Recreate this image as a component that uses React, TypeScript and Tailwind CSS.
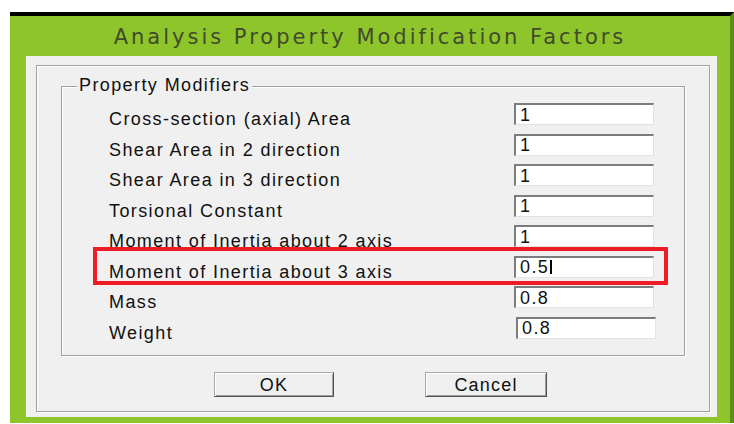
import React from 'react';

type Modifier = { label: string; value: string; active?: boolean; shift?: boolean };

const modifiers: Modifier[] = [
  { label: 'Cross-section (axial) Area', value: '1' },
  { label: 'Shear Area in 2 direction', value: '1' },
  { label: 'Shear Area in 3 direction', value: '1' },
  { label: 'Torsional Constant', value: '1' },
  { label: 'Moment of Inertia about 2 axis', value: '1' },
  { label: 'Moment of Inertia about 3 axis', value: '0.5', active: true },
  { label: 'Mass', value: '0.8' },
  { label: 'Weight', value: '0.8', shift: true },
];

function ValueBox({ value, active, shift }: { value: string; active?: boolean; shift?: boolean }) {
  return (
    <div
      className={`flex h-[22px] w-[140px] items-center bg-white pl-[4px] border-t-2 border-l-2 border-t-[#7c7c7c] border-l-[#7c7c7c] border-r border-b border-r-[#e2e2e2] border-b-[#e2e2e2] ${
        shift ? 'ml-[2px]' : ''
      }`}
    >
      <span className="leading-[18px]">{value}</span>
      {active && <span className="ml-[1px] h-[14px] w-[2px] bg-black" />}
    </div>
  );
}

function Button({ children, width }: { children: React.ReactNode; width: string }) {
  return (
    <button
      className={`${width} h-[25px] bg-[#efefef] border border-t-[#a8a8a8] border-l-[#a8a8a8] border-r-[#505050] border-b-[#505050] shadow-[inset_1px_1px_0_#ffffff,inset_-1px_-1px_0_#a0a0a0] text-[18px] leading-[18px] tracking-[1.2px] text-[#111]`}
    >
      {children}
    </button>
  );
}

export default function App() {
  return (
    <div className="h-[424px] w-[734px] overflow-hidden bg-white pt-[12px] pl-[10px] font-['Liberation_Sans',Arial,sans-serif]">
      <div className="flex h-[411px] w-[724px] flex-col border-t-4 border-t-black border-r-4 border-r-[#5f8d1d] bg-[#8dc52b]">
        {/* caption */}
        <div className="flex h-[40px] items-center justify-center pt-[2px]">
          <span className="font-['DejaVu_Sans',Verdana,sans-serif] text-[21px] leading-[24px] tracking-[3px] text-[#414b2c]">
            Analysis Property Modification Factors
          </span>
        </div>

        {/* client area */}
        <div className="ml-[16px] h-[361px] w-[691px] bg-[#f0f0f0] pt-[9px] pl-[9px] border-l border-l-[#f7f7f7]">
          <div className="h-[347px] w-[674px] border border-[#a0a0a0] shadow-[inset_1px_1px_0_#ffffff,1px_1px_0_#ffffff] pt-[20px] pl-[24px] text-[18px] leading-[18px] tracking-[1.4px] text-[#111]">
            {/* group box */}
            <div className="relative h-[270px] w-[624px] border border-[#a0a0a0] shadow-[inset_1px_1px_0_#ffffff,1px_1px_0_#ffffff] pt-[16px] pl-[47px]">
              <span className="absolute left-[15px] top-[-11px] bg-[#f0f0f0] px-[2px]">Property Modifiers</span>

              {modifiers.map((m) => (
                <div key={m.label} className="flex h-[30.57px] items-start">
                  <span className="w-[405px] pt-[7px]">{m.label}</span>
                  <ValueBox value={m.value} active={m.active} shift={m.shift} />
                </div>
              ))}

              {/* highlight around the edited row */}
              <div className="pointer-events-none absolute left-[31px] top-[160px] h-[38px] w-[575px] border-4 border-[#ee1c25]" />
            </div>

            <div className="mt-[16px] flex pl-[153px]">
              <Button width="w-[120px]">OK</Button>
              <div className="w-[91px]" />
              <Button width="w-[122px]">Cancel</Button>
            </div>
          </div>
        </div>
      </div>
    </div>
  );
}
